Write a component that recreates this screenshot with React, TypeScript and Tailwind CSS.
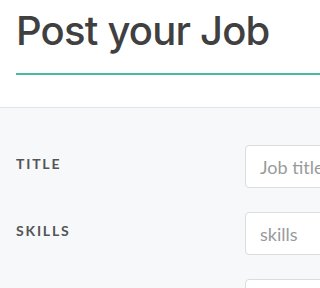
const FIELDS = [
  { key: "title", label: "TITLE", placeholder: "Job title" },
  { key: "skills", label: "SKILLS", placeholder: "skills" },
  { key: "location", label: "LOCATION", placeholder: "" },
];

export default function App() {
  return (
    <div className="h-screen w-full overflow-hidden bg-[#f7f8fa] font-['Lato',sans-serif]">
      <header className="border-b border-[#e3e4e6] bg-white pl-4 pt-[5px] pb-[32px]">
        <h1 className="whitespace-nowrap text-[40px] font-medium leading-[52px] text-[#404040] font-['Inter',sans-serif] tracking-[-0.8px]">
          Post your Job
        </h1>
        <div className="mt-[16px] h-[2px] bg-[#45bc9f]" />
      </header>

      <form className="flex flex-col gap-6 pt-[37px] pl-4">
        {FIELDS.map((f) => (
          <div key={f.key} className="flex items-center">
            <label className="mb-[7px] w-[229px] shrink-0 text-[14px] font-bold tracking-[1.8px] text-[#555]">
              {f.label}
            </label>
            <input
              className="h-[43px] w-[200px] shrink-0 rounded-[4px] border border-[#dcdcdc] bg-white px-[14px] text-[18px] text-[#555] placeholder:text-[#9a9a9a] outline-none"
              placeholder={f.placeholder}
            />
          </div>
        ))}
      </form>
    </div>
  );
}
